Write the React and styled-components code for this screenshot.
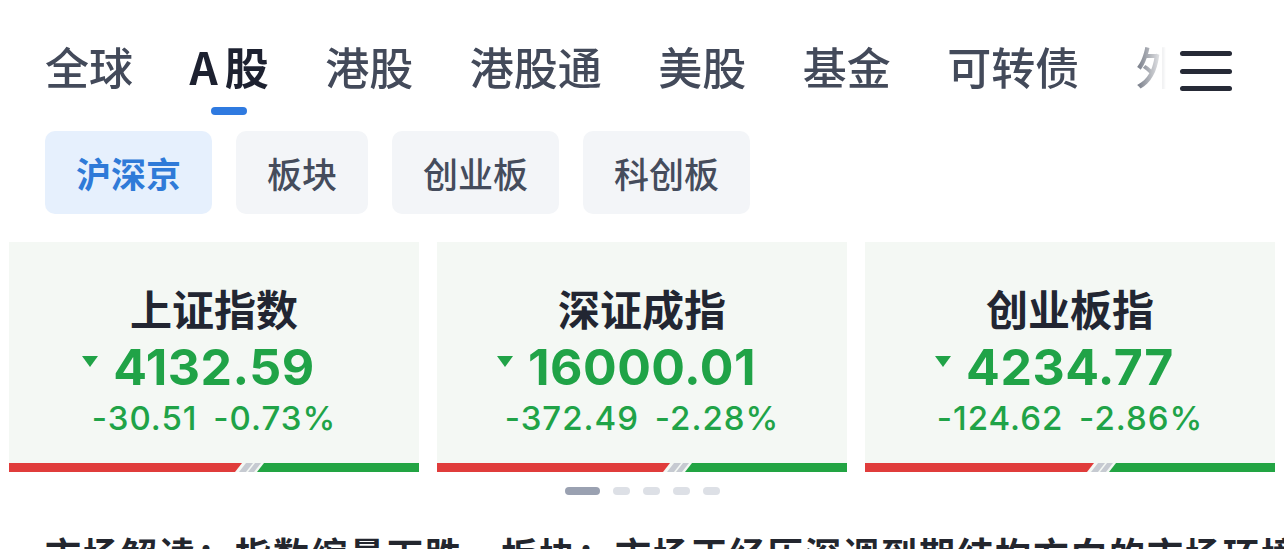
import React from "react";
import styled, { createGlobalStyle } from "styled-components";

const GlobalStyle = createGlobalStyle`
  html, body {
    margin: 0;
    padding: 0;
    background: #ffffff;
    overflow: hidden;
  }
  body {
    font-family: "Noto Sans CJK SC", "Noto Sans", sans-serif;
    -webkit-font-smoothing: antialiased;
  }
`;

const Page = styled.div`
  width: 1284px;
  height: 549px;
  overflow: hidden;
  background: #fff;
`;

const Header = styled.div`
  display: flex;
  align-items: flex-start;
  padding: 42px 52px 0 45px;
`;

const TabScroller = styled.div`
  flex: 1;
  display: flex;
  gap: 56.5px;
  padding-bottom: 28px;
  overflow: hidden;
  white-space: nowrap;
  -webkit-mask-image: linear-gradient(to right, #000 0, #000 calc(100% - 40px), transparent 100%);
  mask-image: linear-gradient(to right, #000 0, #000 calc(100% - 40px), transparent 100%);
`;

const Tab = styled.div`
  position: relative;
  flex: none;
  font-size: 44px;
  line-height: 48px;
  font-weight: ${(p) => (p.$active ? 700 : 500)};
  color: ${(p) => (p.$active ? "#1d2130" : "#434a5a")};

  &::after {
    content: "";
    display: ${(p) => (p.$active ? "block" : "none")};
    position: absolute;
    left: 50%;
    top: 65px;
    width: 36px;
    height: 8px;
    margin-left: -18px;
    border-radius: 4px;
    background: #2f7ae0;
  }
`;

const Latin = styled.span`
  margin-right: 7px;
`;

const MenuButton = styled.div`
  flex: none;
  width: 52px;
  height: 40px;
  margin-left: 14px;
  margin-top: 9px;
  display: flex;
  flex-direction: column;
  justify-content: space-between;

  span {
    display: block;
    height: 5px;
    border-radius: 3px;
    background: #262a36;
  }
`;

const ChipRow = styled.div`
  display: flex;
  gap: 24px;
  padding: 13px 0 0 45px;
`;

const Chip = styled.div`
  height: 83px;
  padding: 0 31px;
  display: flex;
  align-items: center;
  border-radius: 10px;
  font-size: 35px;
  font-weight: ${(p) => (p.$active ? 700 : 500)};
  color: ${(p) => (p.$active ? "#2f7ad8" : "#454c5c")};
  background: ${(p) => (p.$active ? "#e6f0fd" : "#f3f5f8")};
`;

const CardRow = styled.div`
  display: flex;
  gap: 18px;
  padding: 28px 9px 0 9px;
`;

const Card = styled.div`
  width: 410px;
  height: 230px;
  background: #f4f8f4;
  display: flex;
  flex-direction: column;
  align-items: center;
`;

const Title = styled.div`
  margin-top: 44px;
  font-size: 42px;
  line-height: 44px;
  font-weight: 700;
  color: #222632;
`;

const ValueLine = styled.div`
  position: relative;
  margin-top: 10px;
  font-family: Inter, "Liberation Sans", sans-serif;
  font-size: 50px;
  line-height: 54px;
  font-weight: 700;
  color: #20a347;
  letter-spacing: 0.5px;
`;

const DownMark = styled.svg`
  position: absolute;
  left: -31px;
  top: 16px;
  width: 16px;
  height: 11px;
`;

const Change = styled.div`
  margin-top: 6px;
  font-family: Inter, "Liberation Sans", sans-serif;
  font-size: 33px;
  line-height: 36px;
  font-weight: 500;
  color: #20a347;
  word-spacing: 6px;
  letter-spacing: 1px;
`;

const BarSvg = styled.svg`
  display: block;
  margin-top: auto;
  width: 410px;
  height: 9px;
`;

const Dots = styled.div`
  display: flex;
  justify-content: center;
  gap: 13px;
  padding-top: 15px;
`;

const Dot = styled.span`
  width: ${(p) => (p.$active ? 35 : 17)}px;
  height: 8px;
  border-radius: 4px;
  background: ${(p) => (p.$active ? "#9aa1b1" : "#dde0e6")};
`;

const Summary = styled.div`
  padding: 38px 0 0 45px;
  font-size: 36px;
  line-height: 40px;
  font-weight: 700;
  letter-spacing: 2px;
  color: #23262e;
  white-space: nowrap;
`;

const tabs = ["全球", "A股", "港股", "港股通", "美股", "基金", "可转债", "外汇", "期货"];
const chips = ["沪深京", "板块", "创业板", "科创板"];

const indices = [
  { name: "上证指数", value: "4132.59", diff: "-30.51", pct: "-0.73%", split: 233 },
  { name: "深证成指", value: "16000.01", diff: "-372.49", pct: "-2.28%", split: 233 },
  { name: "创业板指", value: "4234.77", diff: "-124.62", pct: "-2.86%", split: 229 },
];

function RatioBar({ split }) {
  const s = split;
  return (
    <BarSvg viewBox="0 0 410 9" preserveAspectRatio="none">
      <polygon points={`0,0 ${s},0 ${s - 7},9 0,9`} fill="#e03c3b" />
      <polygon points={`${s + 4},0 ${s + 11},0 ${s + 4},9 ${s - 3},9`} fill="#c6cad1" />
      <polygon points={`${s + 13},0 ${s + 19},0 ${s + 12},9 ${s + 6},9`} fill="#c6cad1" />
      <polygon points={`${s + 22},0 410,0 410,9 ${s + 15},9`} fill="#22a443" />
    </BarSvg>
  );
}

function IndexCard({ item }) {
  return (
    <Card>
      <Title>{item.name}</Title>
      <ValueLine>
        <DownMark viewBox="0 0 16 11">
          <polygon points="0,0 16,0 8,11" fill="#20a347" />
        </DownMark>
        {item.value}
      </ValueLine>
      <Change>
        {item.diff} {item.pct}
      </Change>
      <RatioBar split={item.split} />
    </Card>
  );
}

function TabLabel({ text }) {
  // Latin prefix (the "A" of A股) gets a little extra room before the CJK glyph
  const m = text.match(/^([A-Za-z]+)(.*)$/);
  if (!m) return text;
  return (
    <>
      <Latin>{m[1]}</Latin>
      {m[2]}
    </>
  );
}

export default function App() {
  return (
    <Page>
      <GlobalStyle />
      <Header>
        <TabScroller>
          {tabs.map((t) => (
            <Tab key={t} $active={t === "A股"}>
              <TabLabel text={t} />
            </Tab>
          ))}
        </TabScroller>
        <MenuButton>
          <span />
          <span />
          <span />
        </MenuButton>
      </Header>
      <ChipRow>
        {chips.map((c, i) => (
          <Chip key={c} $active={i === 0}>
            {c}
          </Chip>
        ))}
      </ChipRow>
      <CardRow>
        {indices.map((it) => (
          <IndexCard key={it.name} item={it} />
        ))}
      </CardRow>
      <Dots>
        <Dot $active />
        <Dot />
        <Dot />
        <Dot />
        <Dot />
      </Dots>
      <Summary>市场解读：指数缩量下跌，板块：市场正经历深调到期结构方向的市场环境</Summary>
    </Page>
  );
}
